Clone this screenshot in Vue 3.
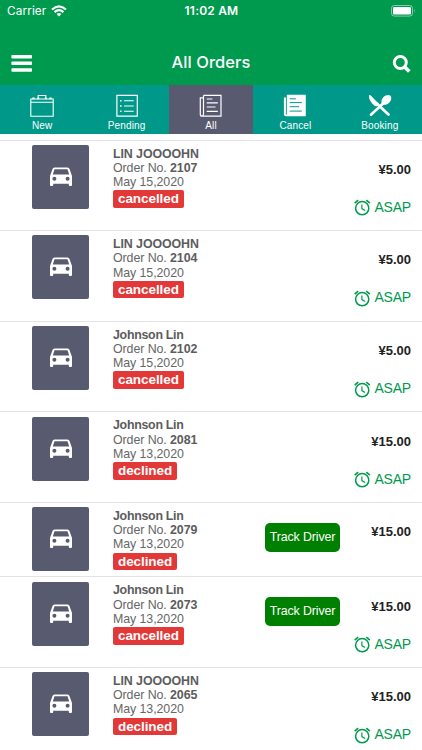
<script setup>
const tabs = [
  { label: 'New', icon: 'bag' },
  { label: 'Pending', icon: 'list' },
  { label: 'All', icon: 'papers', active: true },
  { label: 'Cancel', icon: 'filled' },
  { label: 'Booking', icon: 'utensils' },
]
const orders = [
  { name: 'LIN JOOOOHN', no: '2107', date: 'May 15,2020', status: 'cancelled', price: '¥5.00', asap: true },
  { name: 'LIN JOOOOHN', no: '2104', date: 'May 15,2020', status: 'cancelled', price: '¥5.00', asap: true },
  { name: 'Johnson Lin', no: '2102', date: 'May 15,2020', status: 'cancelled', price: '¥5.00', asap: true },
  { name: 'Johnson Lin', no: '2081', date: 'May 13,2020', status: 'declined', price: '¥15.00', asap: true },
  { name: 'Johnson Lin', no: '2079', date: 'May 13,2020', status: 'declined', price: '¥15.00', track: true },
  { name: 'Johnson Lin', no: '2073', date: 'May 13,2020', status: 'cancelled', price: '¥15.00', asap: true, track: true },
  { name: 'LIN JOOOOHN', no: '2065', date: 'May 13,2020', status: 'declined', price: '¥15.00', asap: true },
]
</script>

<template>
  <div class="screen">
    <header>
      <div class="status-bar">
        <div class="carrier">
          <span>Carrier</span>
          <svg width="16" height="12" viewBox="0 0 16 12" fill="none" stroke="#fff" stroke-width="2.1">
            <path d="M1 4.5Q8-1.9 15 4.5M3.5 7.1Q8 3.2 12.5 7.1" />
            <path d="M5.6 9Q8 7.1 10.4 9L8 11.5Z" fill="#fff" stroke="none" />
          </svg>
        </div>
        <span class="time">11:02 AM</span>
        <svg class="battery" width="25" height="12" viewBox="0 0 25 12">
          <rect x=".5" y=".5" width="21" height="10.6" rx="2.8" fill="none" stroke="#fff" stroke-opacity=".5" />
          <rect x="2" y="2" width="18" height="7.6" rx="1.4" fill="#fff" />
          <path d="M23 4Q24.5 5.8 23 7.6Z" fill="#fff" opacity=".6" />
        </svg>
      </div>
      <div class="nav">
        <svg width="21" height="18" viewBox="0 0 21 18" fill="#fff">
          <rect x=".4" y=".9" width="20.6" height="3.6" rx=".8" />
          <rect x=".4" y="7.5" width="20.6" height="3.6" rx=".8" />
          <rect x=".4" y="14.2" width="20.6" height="3.6" rx=".8" />
        </svg>
        <h1>All Orders</h1>
        <svg width="19" height="19" viewBox="0 0 19 19" fill="none" stroke="#fff" stroke-width="3">
          <circle cx="8.3" cy="8.5" r="6" />
          <path d="M12.5 12.7L17.3 17.5" stroke-width="3.7" />
        </svg>
      </div>
    </header>

    <nav class="tabs">
      <div v-for="t in tabs" :key="t.label" class="tab" :class="{ active: t.active }">
        <svg v-if="t.icon === 'bag'" width="24" height="24" viewBox="0 0 24 24" fill="none" stroke="#fff">
          <path d="M.8 5H23.2V22.3H.8ZM8.2 4.8V1.5H15.8V4.8M.8 8.3H23.2" stroke-width="1.1" />
          <path d="M2.3 4.3H4.7M19.3 4.3H21.7M7.2 4.3H9.2M14.8 4.3H16.8" stroke-width="1.8" />
        </svg>
        <svg v-else-if="t.icon === 'list'" width="24" height="24" viewBox="0 0 24 24" fill="none" stroke="#fff">
          <path d="M1.9 1.4H22.3V22.2H1.9Z" stroke-width="1.2" />
          <path d="M9 6.8H18.7M9 12H18.7M9 17.2H18.7" stroke-width="1.1" />
          <path d="M5 6.8H6.6M5 12H6.6M5 17.2H6.6" stroke-width="1.6" />
        </svg>
        <svg v-else-if="t.icon === 'papers'" width="24" height="24" viewBox="0 0 24 24" fill="none" stroke="#fff">
          <path d="M4.5 1.4H22V22.2H3Q1.3 22.2 1.3 20.3V3.9H4.5M4.5 1.4V20Q4.5 21.7 3 22" stroke-width="1.2" />
          <path d="M7.7 5H13.4M7.7 8.8H18.8M7.7 13H16.5M7.7 17.4H18.8" stroke-width="1.2" />
        </svg>
        <svg v-else-if="t.icon === 'filled'" width="24" height="24" viewBox="0 0 24 24">
          <path d="M3.8.7H22.8V22.2H3Q.9 22.2.9 20.4V3.6H2.9V20.4H3.8Z" fill="#fff" />
          <path d="M6.7 4.8H12.9M6.7 8.6H18.8M6.7 12.7H16.1M6.7 17.1H18.8" stroke="#009889" stroke-width="1" />
        </svg>
        <svg v-else width="24" height="24" viewBox="0 0 24 24">
          <path d="M3 20.8L15.3 9.2" stroke="#fff" stroke-width="2.6" stroke-linecap="round" />
          <path d="M13.4 8.3C13.4 4 17 .8 20.8 1.1Q23.1 1.3 23.3 3.4C23.5 7.2 20.3 10.6 16.2 10.8L13.8 11.6Z" fill="#fff" />
          <path d="M1 1.2Q2 .7 3 1.8L11 10.1L8.6 12.3Q7 12.6 6 11.2Q.4 6.4 1 1.2Z" fill="#fff" />
          <path d="M9 9.8L20.5 20.6" stroke="#fff" stroke-width="2.7" stroke-linecap="round" />
        </svg>
        <span>{{ t.label }}</span>
      </div>
    </nav>

    <main>
      <article v-for="o in orders" :key="o.no" class="order" :class="{ compact: !o.asap }">
        <div class="tile">
          <svg width="24" height="20" viewBox="0 0 24 20">
            <path fill="#fff" fill-rule="evenodd" d="M5.5.5H18.5Q20 .5 20.5 2L23 9V18Q23 19 22 19H20.8Q19.8 19 19.8 18V16.7H4.2V18Q4.2 19 3.2 19H2Q1 19 1 18V9L3.5 2Q4 .5 5.5.5ZM5.5 2.3L3.8 7.6H20.2L18.5 2.3ZM5.4 9.8A2 2 0 1 0 5.4 13.8A2 2 0 1 0 5.4 9.8ZM18.6 9.8A2 2 0 1 0 18.6 13.8A2 2 0 1 0 18.6 9.8Z" />
          </svg>
        </div>
        <div class="details">
          <div class="name" :class="{ mixed: !o.name.startsWith('LIN') }">{{ o.name }}</div>
          <div class="number">Order No. <b>{{ o.no }}</b></div>
          <div class="date">{{ o.date }}</div>
          <div class="badge">{{ o.status }}</div>
        </div>
        <div class="action"><button v-if="o.track">Track Driver</button></div>
        <div class="side">
          <div class="price">{{ o.price }}</div>
          <div v-if="o.asap" class="asap">
            <svg width="17" height="17" viewBox="0 0 17 17" fill="none" stroke="#009a4e">
              <circle cx="8.2" cy="9.2" r="6.6" stroke-width="1.5" />
              <path d="M.7 4.2L4.2 1.1M12.3 1.1L15.8 4.2" stroke-width="1.6" />
              <path d="M7.9 5.5V9.6L11 11.6" stroke-width="1.2" />
            </svg>
            <span>ASAP</span>
          </div>
        </div>
      </article>
    </main>
  </div>
</template>

<style>
body { margin: 0; overflow: hidden; }
</style>

<style scoped>
.screen {
  width: 422px;
  height: 750px;
  overflow: hidden;
  background: #fff;
  font-family: "Liberation Sans", Arial, sans-serif;
}
header { height: 85px; background: #009a4e; color: #fff; }
.status-bar {
  display: grid;
  grid-template-columns: 1fr auto 1fr;
  align-items: center;
  height: 21px;
  padding: 0 6px 0 7px;
  font-family: Inter, sans-serif;
  font-size: 12px;
}
.carrier { display: flex; align-items: center; gap: 5px; font-size: 11.8px; letter-spacing: .1px; }
.time { font-weight: 600; letter-spacing: .2px; }
.battery { justify-self: end; }
.nav {
  display: flex;
  align-items: center;
  justify-content: space-between;
  height: 64px;
  padding: 20px 11px 0;
  box-sizing: border-box;
}
h1 { margin: 0 2px 3px 0; font-family: Inter, sans-serif; font-size: 16.5px; line-height: 20px; font-weight: 500; letter-spacing: .05px; }
.tabs { display: grid; grid-template-columns: repeat(5, 1fr); height: 48.5px; background: #009889; }
.tab {
  display: flex;
  flex-direction: column;
  align-items: center;
  padding-top: 9px;
  color: #fff;
  font-size: 10px;
  line-height: 12px;
}
.tab span { margin-top: 2px; letter-spacing: .15px; }
.active { background: #585a70; }
main { padding-top: 6px; }
.order {
  display: flex;
  height: 90.6px;
  box-sizing: border-box;
  border-top: 1px solid #e3e3e3;
  padding: 4.4px 11px 0 32px;
}
.compact { height: 74.4px; }
.tile {
  display: flex;
  align-items: center;
  justify-content: center;
  width: 57px;
  height: 64px;
  border-radius: 2px;
  background: #585a70;
}
.details { width: 152px; margin-left: 24px; padding-top: 1.8px; color: #666; font-size: 12.4px; line-height: 14.2px; letter-spacing: -.08px; white-space: nowrap; }
.name, .number b { font-weight: bold; color: #5c5c5c; }
.mixed { letter-spacing: -.28px; }
.badge {
  display: inline-block;
  height: 17.5px;
  margin-top: 1px;
  padding: 0 5px;
  border-radius: 2px;
  background: #e23837;
  color: #fff;
  font-size: 13.5px;
  font-weight: bold;
  line-height: 17.5px;
}
.action { width: 75px; padding-top: 15.6px; }
button {
  width: 75px;
  height: 29px;
  padding: 0;
  border: 0;
  border-radius: 5px;
  background: #008000;
  color: #fff;
  font: 12.4px/29px "Liberation Sans", Arial, sans-serif;
  letter-spacing: -.12px;
  white-space: nowrap;
}
.side { flex: 1; padding-top: 17px; text-align: right; }
.price { color: #222; font-size: 13px; font-weight: bold; line-height: 16px; }
.asap { display: flex; justify-content: flex-end; align-items: center; gap: 3.5px; margin-top: 19px; color: #009a4e; font-size: 14px; letter-spacing: -.2px; line-height: 20px; }
.asap svg { margin-top: 2px; }
</style>
